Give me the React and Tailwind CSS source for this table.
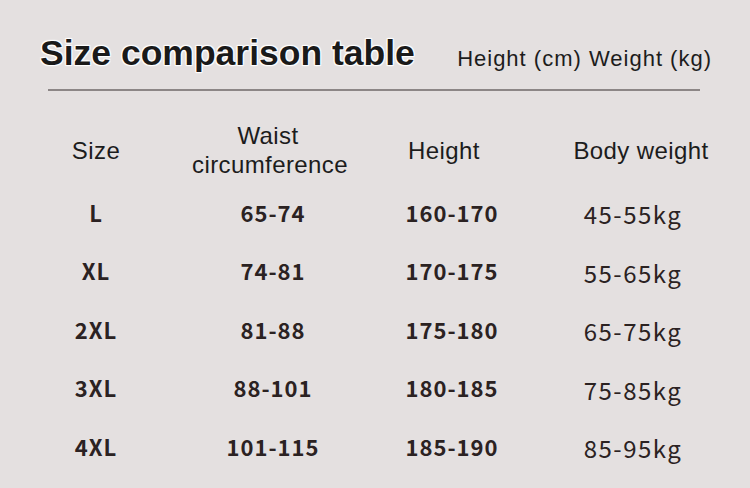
const rows = [
  { size: "L", waist: "65-74", height: "160-170", weight: "45-55kg" },
  { size: "XL", waist: "74-81", height: "170-175", weight: "55-65kg" },
  { size: "2XL", waist: "81-88", height: "175-180", weight: "65-75kg" },
  { size: "3XL", waist: "88-101", height: "180-185", weight: "75-85kg" },
  { size: "4XL", waist: "101-115", height: "185-190", weight: "85-95kg" },
];

const App = () => {
  return (
    <div className="w-[750px] h-[488px] bg-[#e4e0e0] overflow-hidden font-['Liberation_Sans',Arial,sans-serif]">
      {/* Titel */}
      <div className="flex items-end pl-[40px] pr-[38px] h-[71px]">
        <h1 className="text-[35.5px] font-bold text-[#1a1a1a] leading-none [text-shadow:0_0_1px_#fff,0_0_2px_#fff,1px_1px_1px_#fff,-1px_-1px_1px_#fff,1px_-1px_1px_#fff,-1px_1px_1px_#fff]">
          Size comparison table
        </h1>
        <div className="ml-auto text-[22px] tracking-[1px] text-[#1c1c1c] leading-none pb-[1px]">
          Height (cm) Weight (kg)
        </div>
      </div>
      <div className="ml-[48px] mr-[50px] mt-[18px] h-[2px] bg-[#8c8686]" />

      {/* Kopfzeile */}
      <div className="grid grid-cols-[192px_162px_196px_166px] items-center h-[92px] pt-[26px] text-[24px] tracking-[0.4px] text-[#1c1c1c] leading-[29px]">
        <div className="text-center">Size</div>
        <div className="text-center pr-[10px]">
          Waist
          <br />
          circumference
        </div>
        <div className="text-center pr-[16px]">Height</div>
        <div className="text-center pl-[16px]">Body weight</div>
      </div>

      {/* Zeilen */}
      <div className="font-['Noto_Sans_CJK_SC',sans-serif] text-[#2b2222]">
        {rows.map((r) => (
          <div
            key={r.size}
            className="grid grid-cols-[192px_162px_196px_166px] items-center h-[58.5px]"
          >
            <div className="text-center text-[22px] tracking-[1px] font-bold">{r.size}</div>
            <div className="text-center text-[22px] tracking-[1px] font-bold">{r.waist}</div>
            <div className="text-center text-[22px] tracking-[1px] font-bold">{r.height}</div>
            <div className="text-center text-[24px] tracking-[1.5px] pt-[4px]">{r.weight}</div>
          </div>
        ))}
      </div>
    </div>
  );
};

export default App;
